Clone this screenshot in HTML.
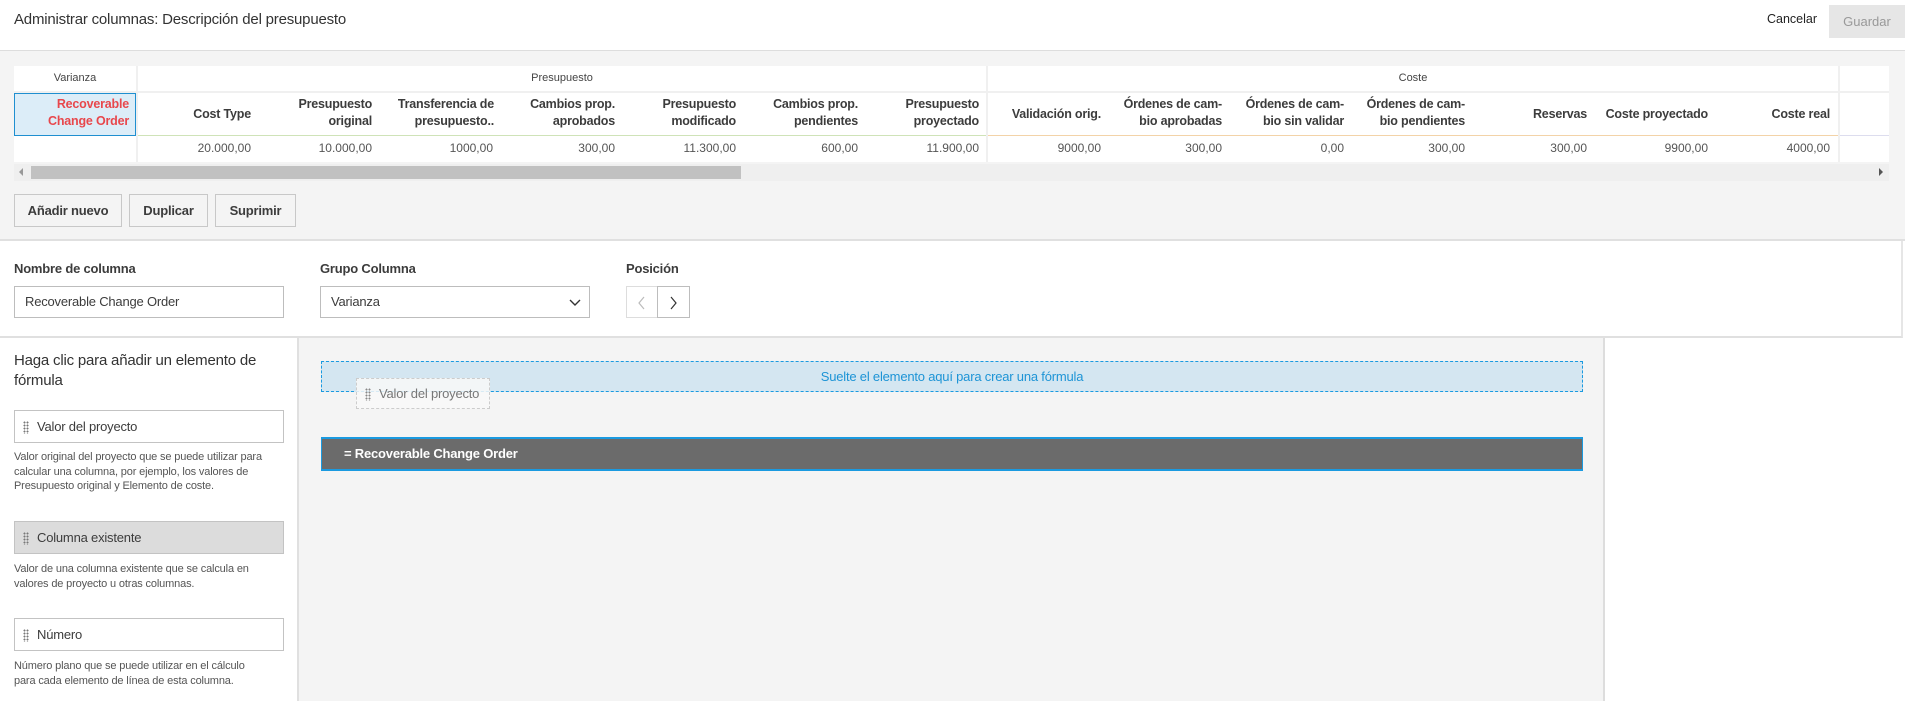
<!DOCTYPE html>
<html><head><meta charset="utf-8"><style>
*{box-sizing:border-box;margin:0;padding:0}
body{width:1905px;height:701px;position:relative;overflow:hidden;background:#fff;font-family:"Liberation Sans",sans-serif;color:#3c3c3c}
.a{position:absolute}
.hd{font-size:12.5px;font-weight:bold;color:#3c3c3c;text-align:right;line-height:17px;letter-spacing:-0.2px}
.dv{font-size:12px;color:#555;text-align:right}
.btn{position:absolute;top:194px;height:33px;border:1px solid #c8c8c8;background:#f4f4f4;font-size:13px;font-weight:bold;color:#3c3c3c;text-align:center;line-height:31px;letter-spacing:-0.2px}
.lbl{font-size:13px;font-weight:bold;top:261px;letter-spacing:-0.2px}
.inp{position:absolute;top:286px;height:32px;border:1px solid #bdbdbd;background:#fff;font-size:13px;line-height:30px;padding-left:10px;letter-spacing:-0.2px}
.item{position:absolute;left:14px;width:270px;height:33px;border:1px solid #c3c3c3;background:#fff;font-size:13px;line-height:31px;padding-left:22px;letter-spacing:-0.2px}
.item:before{content:"";position:absolute;left:8px;top:10px;width:6px;height:13px;background-image:radial-gradient(circle,#777 0.9px,transparent 1.1px);background-size:3px 3px}
.desc{position:absolute;left:14px;width:272px;font-size:11px;line-height:14.5px;color:#555;letter-spacing:-0.15px;white-space:nowrap}
</style></head><body>
<div class="a" style="left:14px;top:11px;font-size:15px;color:#333;letter-spacing:-0.2px">Administrar columnas: Descripción del presupuesto</div>
<div class="a" style="left:1767px;top:12px;font-size:12.5px;color:#222">Cancelar</div>
<div class="a" style="left:1829px;top:5px;width:76px;height:33px;background:#e6e6e6;color:#999;font-size:13px;line-height:33px;text-align:center">Guardar</div>

<div class="a" style="left:0;top:50px;width:1905px;height:191px;background:#f4f4f4;border-top:1px solid #ddd;border-bottom:2px solid #e0e0e0"></div>
<div class="a" style="left:14px;top:66px;width:1875px;height:96px;background:#fff"></div>
<div class="a" style="left:136px;top:66px;width:2px;height:96px;background:#f0f0f0"></div>
<div class="a" style="left:986px;top:66px;width:2px;height:96px;background:#f0f0f0"></div>
<div class="a" style="left:1838px;top:66px;width:2px;height:96px;background:#f0f0f0"></div>
<div class="a" style="left:14px;top:91px;width:1875px;height:2px;background:#f0f0f0"></div>
<div class="a" style="left:138px;top:135px;width:848px;height:1px;background:#cfe3b8"></div>
<div class="a" style="left:988px;top:135px;width:850px;height:1px;background:#f3d3a8"></div>
<div class="a" style="left:1840px;top:135px;width:49px;height:1px;background:#dde"></div>
<div class="a" style="left:14px;top:72px;width:122px;text-align:center;font-size:11px;color:#444">Varianza</div>
<div class="a" style="left:138px;top:72px;width:848px;text-align:center;font-size:11px;color:#444">Presupuesto</div>
<div class="a" style="left:988px;top:72px;width:850px;text-align:center;font-size:11px;color:#444">Coste</div>
<div class="a hd" style="left:14px;top:93px;width:122px;height:43px;background:#dcedf8;border:1px solid #1f8fd0;color:#e8474c;padding:2px 6px 0 0">Recoverable<br>Change Order</div>

<div class="a hd" style="left:150px;top:106px;width:101px">Cost Type</div>
<div class="a hd" style="left:258px;top:96px;width:114px">Presupuesto<br>original</div>
<div class="a hd" style="left:378px;top:96px;width:116px">Transferencia de<br>presupuesto..</div>
<div class="a hd" style="left:500px;top:96px;width:115px">Cambios prop.<br>aprobados</div>
<div class="a hd" style="left:620px;top:96px;width:116px">Presupuesto<br>modificado</div>
<div class="a hd" style="left:740px;top:96px;width:118px">Cambios prop.<br>pendientes</div>
<div class="a hd" style="left:860px;top:96px;width:119px">Presupuesto<br>proyectado</div>
<div class="a hd" style="left:990px;top:106px;width:111px">Validación orig.</div>
<div class="a hd" style="left:1105px;top:96px;width:117px">Órdenes de cam-<br>bio aprobadas</div>
<div class="a hd" style="left:1225px;top:96px;width:119px">Órdenes de cam-<br>bio sin validar</div>
<div class="a hd" style="left:1346px;top:96px;width:119px">Órdenes de cam-<br>bio pendientes</div>
<div class="a hd" style="left:1470px;top:106px;width:117px">Reservas</div>
<div class="a hd" style="left:1590px;top:106px;width:118px">Coste proyectado</div>
<div class="a hd" style="left:1712px;top:106px;width:118px">Coste real</div>

<div class="a dv" style="left:150px;top:141px;width:101px">20.000,00</div>
<div class="a dv" style="left:258px;top:141px;width:114px">10.000,00</div>
<div class="a dv" style="left:378px;top:141px;width:115px">1000,00</div>
<div class="a dv" style="left:500px;top:141px;width:115px">300,00</div>
<div class="a dv" style="left:620px;top:141px;width:116px">11.300,00</div>
<div class="a dv" style="left:740px;top:141px;width:118px">600,00</div>
<div class="a dv" style="left:860px;top:141px;width:119px">11.900,00</div>
<div class="a dv" style="left:990px;top:141px;width:111px">9000,00</div>
<div class="a dv" style="left:1105px;top:141px;width:117px">300,00</div>
<div class="a dv" style="left:1225px;top:141px;width:119px">0,00</div>
<div class="a dv" style="left:1346px;top:141px;width:119px">300,00</div>
<div class="a dv" style="left:1470px;top:141px;width:117px">300,00</div>
<div class="a dv" style="left:1590px;top:141px;width:118px">9900,00</div>
<div class="a dv" style="left:1712px;top:141px;width:118px">4000,00</div>
<div class="a" style="left:14px;top:164px;width:1875px;height:17px;background:#efefef"></div>
<div class="a" style="left:31px;top:166px;width:710px;height:13px;background:#c1c1c1"></div>
<div class="a" style="left:19px;top:168px;width:0;height:0;border:4px solid transparent;border-right-color:#999;border-left:0"></div>
<div class="a" style="left:1879px;top:168px;width:0;height:0;border:4px solid transparent;border-left-color:#555;border-right:0"></div>

<div class="btn" style="left:14px;width:108px">Añadir nuevo</div>
<div class="btn" style="left:129px;width:79px">Duplicar</div>
<div class="btn" style="left:215px;width:81px">Suprimir</div>

<div class="a" style="left:0;top:241px;width:1903px;height:97px;border-right:2px solid #e6e6e6;border-bottom:2px solid #e0e0e0"></div>
<div class="a lbl" style="left:14px">Nombre de columna</div>
<div class="a lbl" style="left:320px">Grupo Columna</div>
<div class="a lbl" style="left:626px">Posición</div>
<div class="inp" style="left:14px;width:270px">Recoverable Change Order</div>
<div class="inp" style="left:320px;width:270px">Varianza<svg class="a" style="left:248px;top:12px" width="12" height="8"><path d="M1 1l5 5 5-5" stroke="#333" stroke-width="1.4" fill="none"/></svg></div>
<div class="a" style="left:626px;top:286px;width:32px;height:32px;border:1px solid #ddd;background:#fff"><svg class="a" style="left:10px;top:9px" width="10" height="14"><path d="M7 1L2 7l5 6" stroke="#bbb" stroke-width="1.2" fill="none"/></svg></div>
<div class="a" style="left:657px;top:286px;width:33px;height:32px;border:1px solid #bdbdbd;background:#fff"><svg class="a" style="left:11px;top:9px" width="10" height="14"><path d="M2 1l5 6-5 6" stroke="#333" stroke-width="1.2" fill="none"/></svg></div>

<div class="a" style="left:297px;top:338px;width:1308px;height:363px;background:#f4f4f4;border-left:2px solid #e0e0e0;border-right:2px solid #ddd"></div>
<div class="a" style="left:14px;top:351px;font-size:15px;line-height:20px;color:#333;width:290px;letter-spacing:-0.2px">Haga clic para añadir un elemento de<br>fórmula</div>
<div class="item" style="top:410px">Valor del proyecto</div>
<div class="desc" style="top:450px">Valor original del proyecto que se puede utilizar para<br>calcular una columna, por ejemplo, los valores de<br>Presupuesto original y Elemento de coste.</div>
<div class="item" style="top:521px;background:#dcdcdc">Columna existente</div>
<div class="desc" style="top:562px">Valor de una columna existente que se calcula en<br>valores de proyecto u otras columnas.</div>
<div class="item" style="top:618px">Número</div>
<div class="desc" style="top:659px">Número plano que se puede utilizar en el cálculo<br>para cada elemento de línea de esta columna.</div>

<div class="a" style="left:321px;top:361px;width:1262px;height:31px;background:#d4e6f1;border:1px dashed #1a9ae0;color:#1d94d6;font-size:13px;text-align:center;line-height:29px;letter-spacing:-0.2px">Suelte el elemento aquí para crear una fórmula</div>
<div class="a" style="left:356px;top:378px;width:134px;height:31px;border:1px dashed #ccc;background:rgba(248,248,248,.85);color:#777;font-size:13px;line-height:29px;padding-left:22px;letter-spacing:-0.2px"><span class="a" style="left:8px;top:9px;width:6px;height:13px;background-image:radial-gradient(circle,#888 0.9px,transparent 1.1px);background-size:3px 3px"></span>Valor del proyecto</div>
<div class="a" style="left:321px;top:437px;width:1262px;height:34px;background:#6b6b6b;border:1px solid #1a9ae0;border-width:2px 1px 2px 1px;color:#fff;font-weight:bold;font-size:13px;line-height:30px;padding-left:22px;letter-spacing:-0.2px">= Recoverable Change Order</div>
</body></html>
